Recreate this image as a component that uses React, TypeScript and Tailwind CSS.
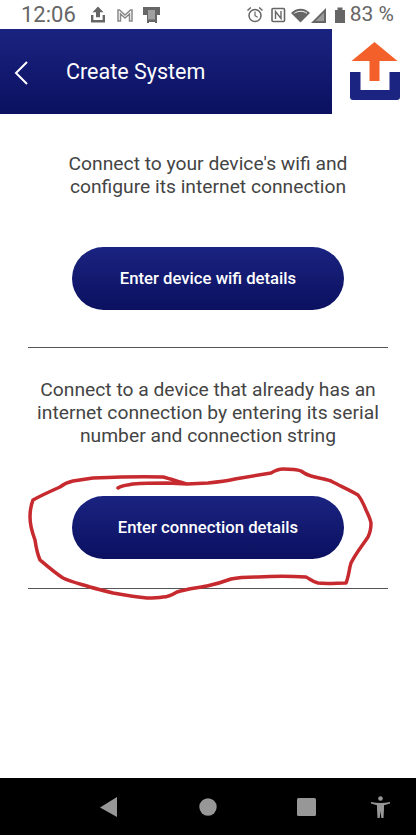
function StatusIcons() {
  return (
    <svg width="416" height="29" viewBox="0 0 416 29" className="absolute left-0 top-0" fill="#666">
      {/* upload */}
      <path d="M98 6.500l5.500 5.800h-3.500v5h-4v-5h-3.500z" />
      <path d="M91 15h2.400v5h9.200v-5h2.400v7.500H91z" />
      {/* gmail */}
      <path d="M118 21V10h1.500l5.500 5 5.500-5h1.500v11h-2.500v-7l-4.500 4-4.500-4v7z" fill="none" stroke="#888" strokeWidth="1.500" />
      {/* device */}
      <path d="M143 7h17v8h-3v8h-2v-1h-6v1h-2v-8h-4z" />
      <rect x="148" y="10" width="7" height="9.500" fill="#a0a0a0" />
      {/* alarm */}
      <circle cx="255" cy="15.500" r="6" fill="none" stroke="#666" strokeWidth="1.500" />
      <path d="M255 11.500v4.200l2.700 1.500" fill="none" stroke="#666" strokeWidth="1.200" />
      <path d="M247.500 10.500l3.300-3M262.500 10.500l-3.300-3" stroke="#666" strokeWidth="1.500" />
      {/* nfc */}
      <rect x="272" y="8.500" width="12.500" height="13" rx="1" fill="none" stroke="#666" strokeWidth="1.600" />
      <path d="M275.500 19V11.500l5.500 7V11" fill="none" stroke="#666" strokeWidth="1.400" />
      {/* wifi */}
      <path d="M291 13c5.500-5.800 13.500-5.800 19 0l-9.500 9.500z" />
      <path d="M294.300 13.300c3.500-2.700 9.200-2.700 12.700 0" stroke="#fff" strokeWidth="1" fill="none" />
      {/* signal */}
      <path d="M326 8v15h-15z" />
      <path d="M324 12.500v8.500h-8.500z" fill="#9a9a9a" />
      {/* battery */}
      <path d="M335 10h2.500V7.500h5V10h2.500v13h-10z" />
    </svg>
  )
}

function Logo() {
  return (
    <svg width="52" height="62" viewBox="0 0 52 62">
      <path d="M25.500 0L48.500 19H30.500V39H20.500V19H2.500z" fill="#f4602a" />
      <path d="M1 30h10.500v18h29V30H51v25a3 3 0 0 1-3 3H4a3 3 0 0 1-3-3z" fill="#1b2480" />
    </svg>
  )
}

function NavBar() {
  return (
    <div className="relative h-[57px] bg-black">
      <svg width="416" height="57" viewBox="0 0 416 57" className="absolute left-0 top-0" fill="#979797">
        <path d="M100 29.500L117 19v20z" />
        <circle cx="208" cy="29" r="8.700" />
        <rect x="297" y="20" width="19" height="18" rx="1.500" />
        <circle cx="380.500" cy="20.500" r="2.300" />
        <path d="M371 24c6 1.200 13 1.200 19 0v1.500l-6 1.800v3.700l-0.500 9h-2.200l-0.800-7-0.800 7h-2.200l-0.500-9v-3.700l-6-1.800z" />
      </svg>
    </div>
  )
}

export default function App() {
  return (
    <div className="relative flex h-[835px] w-[416px] flex-col overflow-hidden bg-white font-['Roboto',sans-serif]">
      <div className="relative flex h-[29px] items-center justify-between pl-[21px] pr-[22px] text-[#666]">
        <StatusIcons />
        <span className="text-[22px] leading-none">12:06</span>
        <span className="text-[21px] leading-none">83 %</span>
      </div>

      <div className="flex h-[85px]">
        <div className="flex w-[332px] items-center bg-gradient-to-b from-[#1a2380] to-[#0b1060] pt-[2px] text-white">
          <svg width="16" height="26" viewBox="0 0 16 26" fill="none" className="ml-[13px]">
            <path d="M14 2L3 13l11 11" stroke="#fff" strokeWidth="2" />
          </svg>
          <span className="ml-[37px] text-[21.500px]">Create System</span>
        </div>
        <div className="flex flex-1 pl-[17px] pt-[13px]">
          <Logo />
        </div>
      </div>

      <main className="flex flex-1 flex-col px-[28px] text-[#444]">
        <p className="mt-[38px] text-center text-[19.250px] leading-[23px]">
          Connect to your device's wifi and
          <br />
          configure its internet connection
        </p>
        <button className="mx-auto mt-[49px] h-[63px] w-[272px] rounded-full bg-gradient-to-b from-[#1a2380] to-[#0b1060] text-[16.700px] font-medium text-white">
          Enter device wifi details
        </button>
        <div className="mt-[37px] h-px bg-[#555]" />
        <p className="mt-[30px] text-center text-[19.250px] leading-[23px]">
          Connect to a device that already has an
          <br />
          internet connection by entering its serial
          <br />
          number and connection string
        </p>
        <button className="mx-auto mt-[49px] h-[63px] w-[272px] rounded-full bg-gradient-to-b from-[#1a2380] to-[#0b1060] text-[16.700px] font-medium text-white">
          Enter connection details
        </button>
        <div className="mt-[29px] h-px bg-[#555]" />
      </main>

      <NavBar />

      {/* hand-drawn red circle on top of the screenshot */}
      <svg width="416" height="835" viewBox="0 0 416 835" className="pointer-events-none absolute left-0 top-0" fill="none">
        <path
          d="M118 488 C122 485 128 485 133 484 C145 483 156 483 167 483 L187 484 L208 483 C218 482 226 481 235 479 L271 473 C276 470 279 469 283 469 C290 469 296 469 301 471 C305 474 307 475 311 476 C318 478 325 479 331 481 C340 486 350 490 358 495 C362 500 364 505 366 510 C368 514 370 518 371 523 C371 528 370 533 368 537 C362 546 356 553 351 563 C349 569 349 576 346 583 C337 583 327 584 318 583 C313 582 310 579 306 577 C290 576 274 576 258 577 C248 577 240 577 231 579 C223 582 216 584 207 586 C197 588 186 589 177 592 C172 595 168 597 163 597 C157 598 152 598 147 598 C135 597 124 595 113 593 C105 591 97 589 90 587 C81 584 71 582 63 578 C55 573 47 566 40 560 C37 553 36 547 35 540 C32 532 30 525 30 517 C30 511 31 505 33 500 C42 495 51 491 60 487 C64 484 68 482 73 481 C80 480 86 479 93 478 C116 477 140 476 163 477 C171 479 179 482 187 484"
          stroke="#c62a2e"
          strokeWidth="3.500"
          strokeLinecap="round"
          strokeLinejoin="round"
        />
      </svg>
    </div>
  )
}
